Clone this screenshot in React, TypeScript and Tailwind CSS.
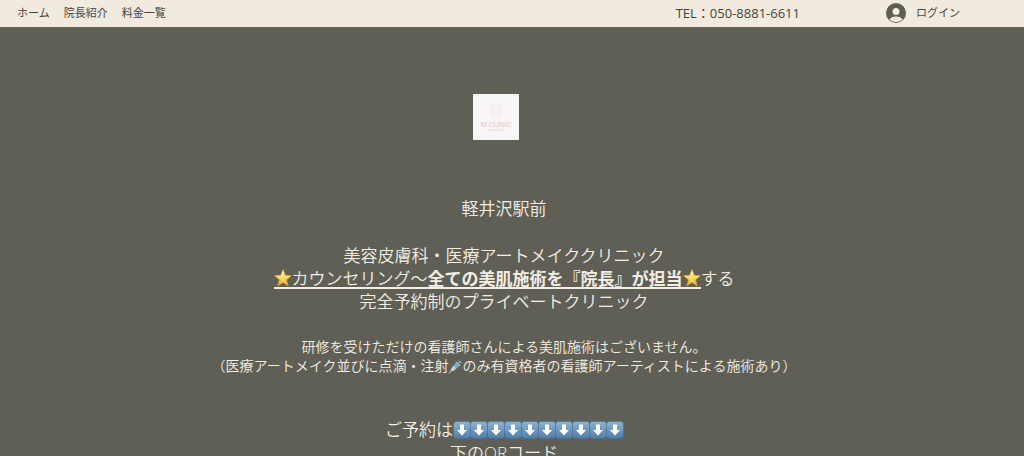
import type { ReactNode } from 'react';

const NAV_ITEMS = [
  { label: 'ホーム', href: '#home' },
  { label: '院長紹介', href: '#director' },
  { label: '料金一覧', href: '#price' },
];

const StarIcon = () => (
  <svg viewBox="0 0 36 36" className="inline-block w-[18px] h-[18px] align-[-2px]" aria-hidden="true">
    <defs>
      <linearGradient id="star-fill" x1="0" y1="0" x2="0" y2="1">
        <stop offset="0" stopColor="#fff3b0" />
        <stop offset="0.5" stopColor="#fcd95a" />
        <stop offset="1" stopColor="#e09a20" />
      </linearGradient>
    </defs>
    <path
      d="M18 1l4.6 11.6L35 13.3l-9.7 8 3.3 12.7L18 27 7.4 34l3.3-12.7L1 13.3l12.4-.7z"
      fill="url(#star-fill)"
      stroke="#e3a62e"
      strokeWidth="1"
      strokeLinejoin="round"
    />
    <path d="M18 5v15L5 15l9-1zM18 20l9 11-9-6-9 6z" fill="#fff3b8" opacity="0.35" />
  </svg>
);

const SyringeIcon = () => (
  <svg viewBox="0 0 28 28" className="inline-block w-[14px] h-[14px] align-[-3px]" aria-hidden="true">
    <path d="M1 27l8-8" stroke="#c9ced0" strokeWidth="2" />
    <path d="M5 20l3 3 4-2L24 10l-6-6L7 16z" fill="#c3d0d6" />
    <path d="M12 12l5 5 7-7-6-6z" fill="#78a5c6" />
    <path d="M16 3l9 9M21 7l4-4M22 1l5 5" stroke="#a9c4d5" strokeWidth="2" />
  </svg>
);

const DownArrowIcon = () => (
  <svg viewBox="0 0 36 36" className="w-[18px] h-[18px] -mr-px" aria-hidden="true">
    <defs>
      <linearGradient id="arrow-fill" x1="0" y1="0" x2="0" y2="1">
        <stop offset="0" stopColor="#8eb4d1" />
        <stop offset="1" stopColor="#4d7da8" />
      </linearGradient>
    </defs>
    <rect x="1" y="1" width="34" height="34" rx="6" fill="url(#arrow-fill)" stroke="#456d91" />
    <path d="M14 7h8v11h6L18 29 8 18h6z" fill="#fff" />
  </svg>
);

const AvatarIcon = () => (
  <svg viewBox="0 0 40 40" className="w-5 h-5" aria-hidden="true">
    <circle cx="20" cy="20" r="20" fill="#5e5e54" />
    <circle cx="20" cy="17" r="7" fill="#f1eadf" />
    <path d="M7 33c2-4 7-6 13-6s11 2 13 6c-3 3-8 5-13 5s-10-2-13-5z" fill="#f1eadf" />
  </svg>
);

const ClinicLogo = () => (
  <svg viewBox="0 0 46 46" className="w-[46px] h-[46px]" role="img" aria-label="M CLINIC">
    <rect width="46" height="46" fill="#f7f6f5" />
    <g fill="none" stroke="#f5eded" strokeWidth="2">
      <circle cx="23" cy="17" r="5" />
      <path d="M18 12l10 10M28 12L18 22" />
    </g>
    <text x="23" y="33" textAnchor="middle" fontSize="7" fill="#e9bfc8" fontFamily="Liberation Sans, sans-serif">
      M CLINIC
    </text>
    <path d="M15 36h16" stroke="#dccdd0" strokeWidth="1" strokeDasharray="2 1" />
  </svg>
);

const Lead = ({ children }: { children: ReactNode }) => (
  <p className="text-[17px] leading-[23px]">{children}</p>
);

const Header = () => (
  <header className="flex items-center h-[27px] pb-0.5 pl-[17px] pr-16 bg-[#f1eadf] text-[#45453d] text-[11px]">
    <nav className="flex gap-[14px]">
      {NAV_ITEMS.map((item) => (
        <a key={item.href} href={item.href} className="leading-4 whitespace-nowrap">
          {item.label}
        </a>
      ))}
    </nav>
    <a
      href="tel:050-8881-6611"
      className="ml-auto mr-[86px] text-[13px] leading-4 whitespace-nowrap"
    >
      TEL：050-8881-6611
    </a>
    <button type="button" className="flex items-center gap-[10px] leading-4 whitespace-nowrap">
      <AvatarIcon />
      ログイン
    </button>
  </header>
);

const App = () => {
  return (
    <div className="h-screen overflow-hidden bg-[#5f5f56] font-['Open_Sans','Noto_Sans_CJK_JP',sans-serif]">
      <Header />

      <main className="flex flex-col items-center pt-[67px] pr-4 text-center text-[#f3eee3] font-[350]">
        <div className="mr-4">
          <ClinicLogo />
        </div>

        <section className="mt-[57px]">
          <Lead>軽井沢駅前</Lead>
          <div className="mt-6">
            <Lead>美容皮膚科・医療アートメイククリニック</Lead>
            <Lead>
              <span className="inline-block leading-4 border-b-2 border-[#f3eee3]">
                <StarIcon />
                カウンセリング～<strong className="font-bold">全ての美肌施術を『院長』が担当</strong>
                <StarIcon />
              </span>
              する
            </Lead>
            <Lead>完全予約制のプライベートクリニック</Lead>
          </div>
        </section>

        {/* Notes about who performs the treatment */}
        <section className="mt-6 text-[14px] leading-[19px]">
          <p>研修を受けただけの看護師さんによる美肌施術はございません。</p>
          <p>
            （医療アートメイク並びに点滴・注射
            <SyringeIcon />
            のみ有資格者の看護師アーティストによる施術あり）
          </p>
        </section>

        {/* Reservation */}
        <section className="mt-[43px]">
          <div className="flex items-center justify-center">
            <Lead>ご予約は</Lead>
            {Array.from({ length: 10 }, (_, i) => (
              <DownArrowIcon key={i} />
            ))}
          </div>
          <Lead>下のQRコード</Lead>
        </section>
      </main>
    </div>
  );
};

export default App;
